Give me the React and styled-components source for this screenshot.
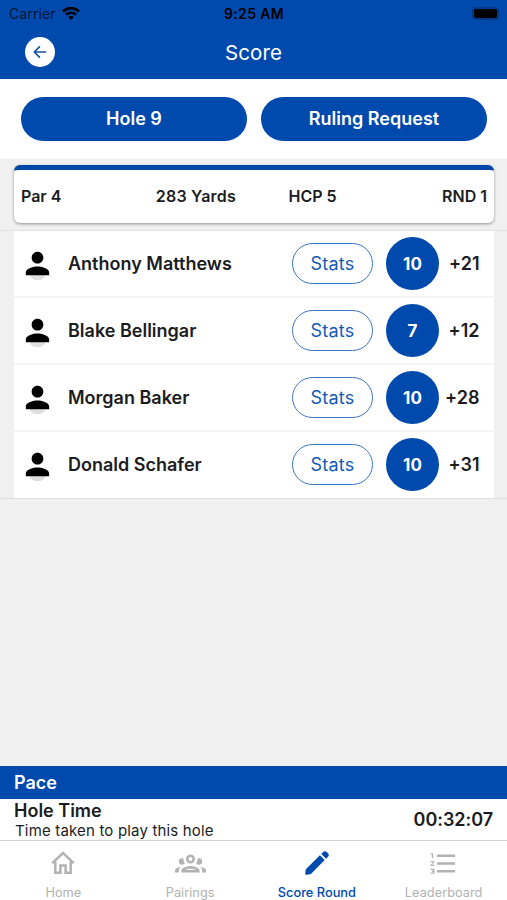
import styled, { createGlobalStyle } from "styled-components";
import { MdPerson } from "react-icons/md";

const players = [
  { name: "Anthony Matthews", score: 10, total: "+21" },
  { name: "Blake Bellingar", score: 7, total: "+12" },
  { name: "Morgan Baker", score: 10, total: "+28" },
  { name: "Donald Schafer", score: 10, total: "+31" },
];

const App = () => {
  return (
    <Screen>
      <GlobalStyle />

      <Header>
        <StatusBar>
          <Carrier>
            Carrier
            <Wifi />
          </Carrier>
          <Clock>9:25 AM</Clock>
          <Battery>
            <Charge />
          </Battery>
        </StatusBar>

        <TitleBar>
          <BackButton aria-label="Back">
            <BackArrow />
          </BackButton>
          <Title>Score</Title>
        </TitleBar>
      </Header>

      <Actions>
        <Action>Hole 9</Action>
        <Action>Ruling Request</Action>
      </Actions>

      <Main>
        <HoleInfo>
          <span>Par 4</span>
          <span>283 Yards</span>
          <span>HCP 5</span>
          <span>RND 1</span>
        </HoleInfo>

        <Players>
          {players.map((player) => (
            <Player key={player.name}>
              <Avatar>
                <MdPerson size={35} />
              </Avatar>
              <Name>{player.name}</Name>
              <Stats>Stats</Stats>
              <Score>{player.score}</Score>
              <Total>{player.total}</Total>
            </Player>
          ))}
        </Players>
      </Main>

      <PaceTitle>Pace</PaceTitle>
      <Pace>
        <div>
          <PaceName>Hole Time</PaceName>
          <PaceNote>Time taken to play this hole</PaceNote>
        </div>
        <Timer>00:32:07</Timer>
      </Pace>

      <TabBar>
        {tabs.map((tab) => (
          <Tab key={tab.label} $active={tab.active}>
            <TabIcon>{tab.icon}</TabIcon>
            {tab.label}
          </Tab>
        ))}
      </TabBar>
    </Screen>
  );
};

const Wifi = () => (
  <svg width="18" height="14" viewBox="0 0 18 14" fill="none">
    <path d="M1 4.4a11.6 11.6 0 0 1 16 0" stroke="#000" strokeWidth="2.8" />
    <path d="M4 7.7a7.3 7.3 0 0 1 10 0" stroke="#000" strokeWidth="2.5" />
    <path d="M9 13.1 6.3 10.3a3.9 3.9 0 0 1 5.4 0z" fill="#000" />
  </svg>
);

const BackArrow = () => (
  <svg width="14" height="14" viewBox="0 0 14 14" fill="none">
    <path
      d="M12.6 7H1.8M6.4 1.9 1.3 7l5.1 5.1"
      stroke="#164f9f"
      strokeWidth="1.7"
      strokeLinecap="round"
      strokeLinejoin="round"
    />
  </svg>
);

const HomeIcon = () => (
  <svg width="24" height="24" viewBox="0 0 24 24" fill="none">
    <path
      d="M1.2 12.1 12 2l10.8 10.1M4.3 10.6v11.2h5.1v-7.4h5.2v7.4h5.1V10.6"
      stroke="currentColor"
      strokeWidth="2.5"
    />
  </svg>
);

const GroupIcon = () => (
  <svg width="31" height="31" viewBox="0 0 24 24" fill="currentColor">
    <path d="M12 5a3.5 3.5 0 1 0 0 7 3.5 3.5 0 0 0 0-7m0 2a1.5 1.5 0 1 1 0 3 1.5 1.5 0 0 1 0-3M5.5 8A2.5 2.5 0 0 0 3 10.5C3 11.9 4.1 13 5.5 13c.9 0 1.7-.5 2.12-1.19A5.4 5.4 0 0 1 6.5 8.22C6.2 8.08 5.86 8 5.5 8m13 0c-.36 0-.7.08-1 .22a5.4 5.4 0 0 1-1.12 3.59c.42.69 1.22 1.19 2.12 1.19a2.5 2.5 0 0 0 0-5M12 14c-2.34 0-7 1.17-7 3.5V19h14v-1.5c0-2.33-4.66-3.5-7-3.5m-7.29.55C2.78 14.78 0 15.76 0 17.5V19h3v-1.93c0-1.01.69-1.85 1.71-2.52m14.58 0c1.02.67 1.71 1.51 1.71 2.52V19h3v-1.5c0-1.74-2.78-2.72-4.71-2.95M12 16c1.53 0 3.24.5 4.23 1H7.77c.99-.5 2.7-1 4.23-1" />
  </svg>
);

const PencilIcon = () => (
  <svg width="24" height="24" viewBox="0 0 24 24" fill="currentColor">
    <path d="M14.9 4.3 1.1 18.1a1.6 1.6 0 0 0-.4.8L.2 22.6c-.1.8.5 1.3 1.2 1.2l3.7-.5c.3 0 .6-.2.8-.4L19.7 9.1zM16.3 2.9l1.9-1.9c1-1 2.5-1 3.5 0l1.3 1.3c1 1 1 2.5 0 3.5l-1.9 1.9z" />
  </svg>
);

const ListIcon = () => (
  <svg width="31" height="31" viewBox="0 0 24 24" fill="currentColor">
    <path d="M7 13v-2h14v2zm0 6v-2h14v2zM7 7V5h14v2zM3 8V5H2V4h2v4zM2 17v-1h3v4H2v-1h2v-.5H3v-1h1V17zM4.25 10a.75.75 0 0 1 .54 1.27L3.12 13H5v1H2v-.92L4 11H2v-1z" />
  </svg>
);

const tabs = [
  { label: "Home", icon: <HomeIcon /> },
  { label: "Pairings", icon: <GroupIcon /> },
  { label: "Score Round", icon: <PencilIcon />, active: true },
  { label: "Leaderboard", icon: <ListIcon /> },
];

const GlobalStyle = createGlobalStyle`
  * {
    box-sizing: border-box;
  }

  body {
    margin: 0;
    font-family: Inter, "Liberation Sans", sans-serif;
    color: #1c1c1e;
  }

  button {
    padding: 0;
    font-family: inherit;
  }
`;

const Screen = styled.div`
  height: 900px;
  display: flex;
  flex-direction: column;
  overflow: hidden;
  background: #f0f0f0;
`;

const Header = styled.header`
  height: 79px;
  background: #004aad;
`;

const StatusBar = styled.div`
  height: 27px;
  display: grid;
  grid-template-columns: 1fr auto 1fr;
  align-items: center;
  padding: 0 8px 0 9px;
  color: #000;
  font-size: 14px;
`;

const Carrier = styled.div`
  display: flex;
  align-items: center;
  gap: 6px;
  color: #001638;
  letter-spacing: 0.1px;
`;

const Clock = styled.div`
  font-weight: 600;
  letter-spacing: 0.35px;
`;

const Battery = styled.div`
  justify-self: end;
  width: 27px;
  height: 13px;
  padding: 2px;
  border-radius: 4px;
  background: #003986;
`;

const Charge = styled.div`
  height: 9px;
  border-radius: 2px;
  background: #000;
`;

const TitleBar = styled.div`
  height: 50px;
  display: grid;
  grid-template-columns: 1fr auto 1fr;
  align-items: center;
  padding: 0 25px;
`;

const BackButton = styled.button`
  width: 30px;
  height: 30px;
  display: flex;
  align-items: center;
  justify-content: center;
  border: 0;
  border-radius: 50%;
  background: #fff;
`;

const Title = styled.h1`
  margin: 0;
  color: #fff;
  font-size: 20.5px;
  font-weight: 400;
  letter-spacing: 0.1px;
`;

const Actions = styled.div`
  height: 80px;
  display: flex;
  gap: 14px;
  padding: 18px 20px 0 21px;
  border-bottom: 1px solid #f8f8f8;
  background: #fff;
`;

const Action = styled.button`
  flex: 1;
  height: 44px;
  padding-bottom: 2px;
  border: 0;
  border-radius: 22px;
  background: #004aad;
  color: #fff;
  font-size: 18px;
  font-weight: 600;
`;

const Main = styled.main`
  flex: 1;
  padding-top: 6px;
`;

const HoleInfo = styled.div`
  height: 58px;
  margin: 0 13px 7px 14px;
  display: flex;
  align-items: center;
  justify-content: space-between;
  padding: 0 7px 2px;
  border-top: 5px solid #0045a8;
  border-radius: 6px;
  background: #fff;
  box-shadow: 0 1px 3px rgba(0, 0, 0, 0.4);
  font-size: 16px;
  font-weight: 600;

  span:nth-child(2) {
    margin-left: 42px;
    letter-spacing: 0.2px;
  }

  span:nth-child(3) {
    margin-right: 53px;
  }
`;

const Players = styled.div`
  padding: 0 13px 0 14px;
  border-top: 1px solid #e2e2e2;
  border-bottom: 1px solid #dedede;
`;

const Player = styled.div`
  height: 67px;
  display: flex;
  align-items: center;
  border-bottom: 2px solid #f4f4f4;
  background: #fff;

  &:last-child {
    height: 66px;
    border-bottom: 1px solid #fff;
  }
`;

const Avatar = styled.div`
  width: 35px;
  height: 35px;
  margin: 0 13px 0 6px;
  border-radius: 50%;
  color: #000;
  background: radial-gradient(ellipse 8px 5px at 50% 84%, #e0e0e0 90%, transparent);
`;

const Name = styled.div`
  flex: 1;
  font-size: 18px;
  font-weight: 600;
`;

const Stats = styled.button`
  width: 81px;
  height: 41px;
  border: 1px solid #3b74c1;
  border-radius: 21px;
  background: #fff;
  color: #145ab4;
  font-size: 18px;
  letter-spacing: 0.2px;
`;

const Score = styled.div`
  width: 53px;
  height: 53px;
  margin-left: 13px;
  display: flex;
  align-items: center;
  justify-content: center;
  border-radius: 50%;
  background: #004aad;
  color: #fff;
  font-size: 17px;
  font-weight: 700;
`;

const Total = styled.div`
  width: 55px;
  padding-right: 14.5px;
  font-size: 18px;
  font-weight: 600;
  text-align: right;
`;

const PaceTitle = styled.h2`
  height: 33px;
  margin: 0;
  padding-left: 14px;
  background: #004aad;
  color: #fff;
  font-size: 18px;
  font-weight: 600;
  line-height: 33px;
`;

const Pace = styled.div`
  height: 41px;
  display: flex;
  align-items: center;
  justify-content: space-between;
  padding: 1px 14px 0;
  background: #fff;
`;

const PaceName = styled.div`
  font-size: 18px;
  font-weight: 600;
  line-height: 21px;
`;

const PaceNote = styled.div`
  padding-left: 1px;
  font-size: 15px;
  letter-spacing: 0.17px;
  line-height: 20px;
`;

const Timer = styled.div`
  padding-bottom: 1px;
  font-size: 18px;
  font-weight: 600;
  letter-spacing: -0.05px;
`;

const TabBar = styled.nav`
  height: 60px;
  display: flex;
  border-top: 1px solid #d2d2d2;
  background: #fff;
`;

const Tab = styled.div`
  flex: 1;
  display: flex;
  flex-direction: column;
  align-items: center;
  padding-top: 5px;
  color: ${({ $active }) => ($active ? "#004aad" : "#b2b2b2")};
  font-size: 12.8px;
  font-weight: ${({ $active }) => ($active ? 500 : 400)};
`;

const TabIcon = styled.div`
  height: 34px;
  display: flex;
  align-items: center;
  margin-bottom: 5px;
`;

export default App;
